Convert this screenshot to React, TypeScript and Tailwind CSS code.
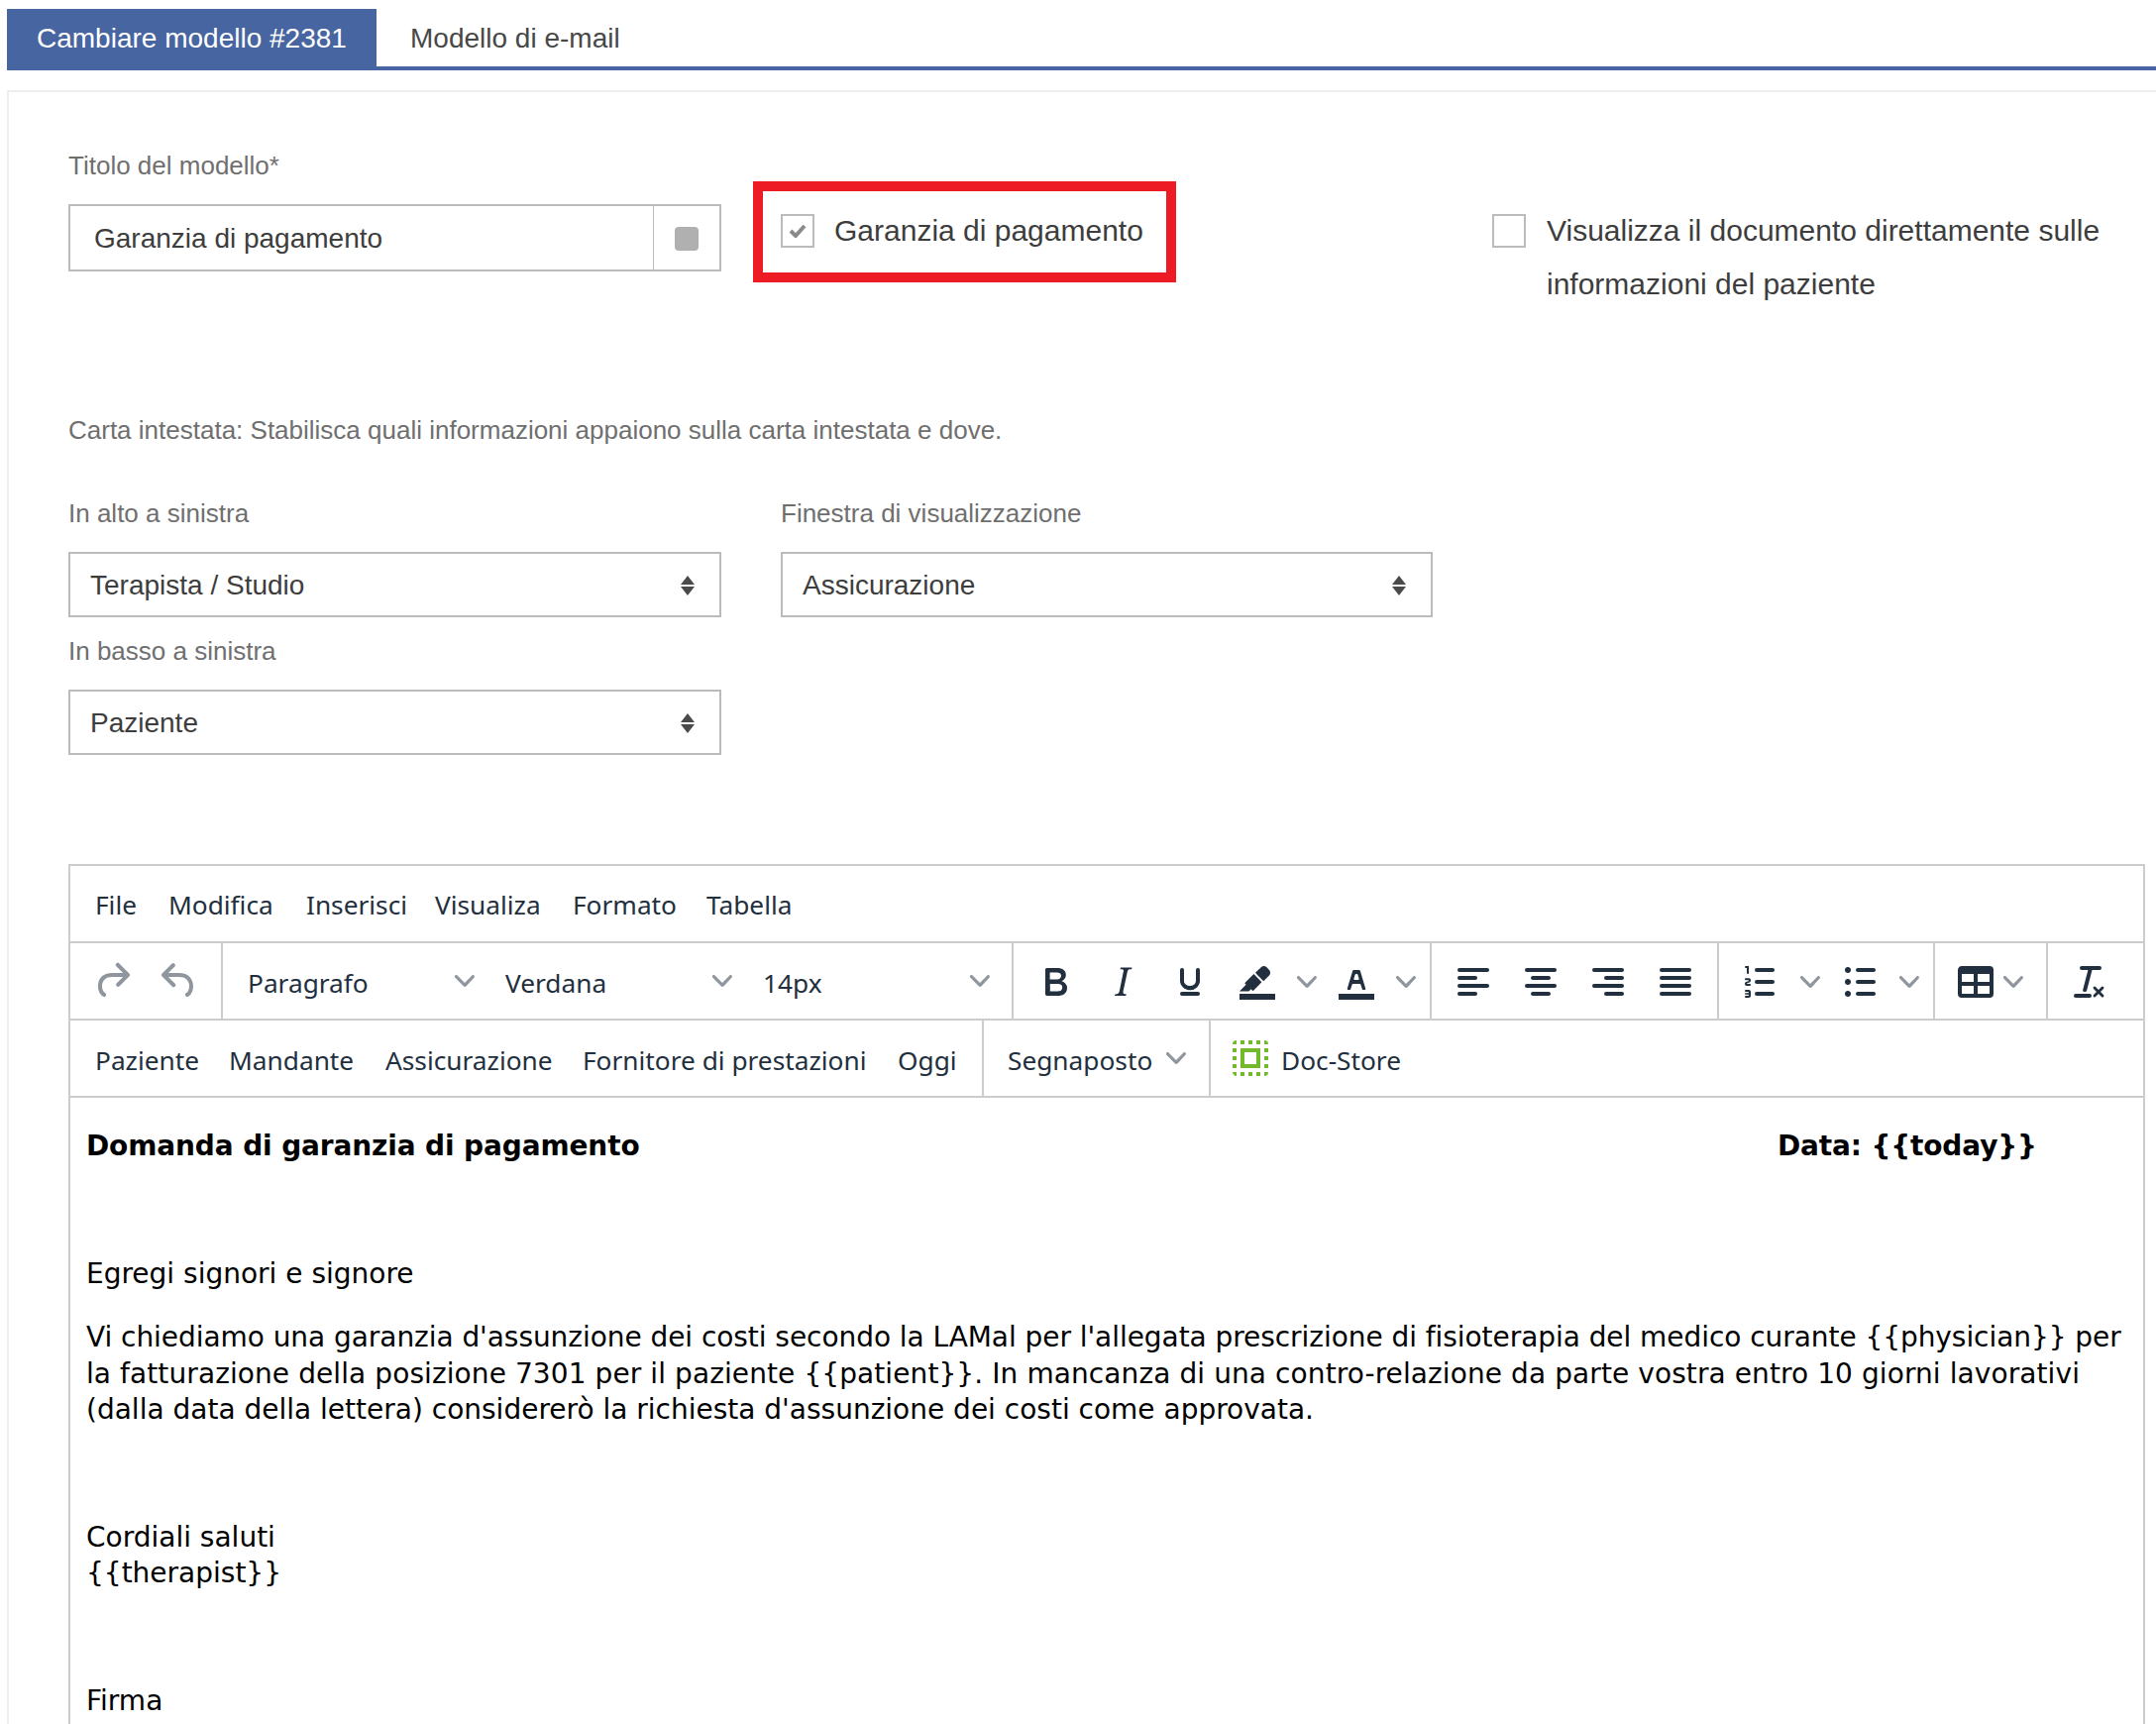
import type { ReactNode } from "react";

const icons: Record<string, ReactNode> = {
  redo: <path d="M17.6 10H12c-2.8 0-4.4 1.4-4.9 3.5-.4 2 .3 4 1.4 4.6a1 1 0 1 1-1 1.8c-2-1.1-2.9-4-2.4-6.8.6-3 3-5.1 6.9-5.1h5.6l-3.3-3.3a1 1 0 1 1 1.4-1.4l5 5a1 1 0 0 1 0 1.4l-5 5a1 1 0 0 1-1.4-1.4l3.3-3.3z" />,
  undo: <path d="M6.4 8H12c3.7 0 6.2 2 6.8 5.1.6 2.7-.4 5.6-2.3 6.8a1 1 0 0 1-1-1.8c1.1-.6 1.8-2.7 1.4-4.6-.5-2.1-2.1-3.5-4.9-3.5H6.4l3.3 3.3a1 1 0 1 1-1.4 1.4l-5-5a1 1 0 0 1 0-1.4l5-5a1 1 0 0 1 1.4 1.4L6.4 8z" />,
  bold: <path fillRule="evenodd" d="M7.8 19c-.3 0-.5 0-.6-.2l-.2-.5V5.7c0-.2 0-.4.2-.5l.6-.2h5c1.5 0 2.7.3 3.5 1 .7.6 1.1 1.4 1.1 2.5a3 3 0 0 1-.6 1.9c-.4.6-1 1-1.6 1.2.4.1.9.3 1.3.6s.8.7 1 1.2c.4.4.5 1 .5 1.6 0 1.3-.4 2.3-1.3 3-.8.7-2.1 1-3.8 1H7.8zm5-8.3c.6 0 1.2-.1 1.6-.5.4-.3.6-.7.6-1.3 0-1.1-.8-1.7-2.3-1.7H9.3v3.5h3.4zm.5 6c.7 0 1.3-.1 1.7-.4.4-.4.6-.9.6-1.5s-.2-1-.7-1.4c-.4-.3-1-.4-2-.4H9.4v3.8h4z" />,
  italic: <path fillRule="evenodd" d="M16.7 4.7l-.1.9h-.3c-.6 0-1 0-1.4.3-.3.3-.4.6-.5 1.1l-2.1 9.8v.6c0 .5.4.8 1.4.8h.2l-.2.8H8l.2-.8h.2c1.1 0 1.8-.5 2-1.5l2-9.8.1-.5c0-.6-.4-.8-1.4-.8h-.3l.2-.9h5.8z" />,
  underline: <path fillRule="evenodd" d="M16 5c.6 0 1 .4 1 1v5.5a4 4 0 0 1-.4 1.8l-1 1.4a5.3 5.3 0 0 1-5.5 1 5 5 0 0 1-1.6-1c-.5-.4-.8-.9-1.1-1.4a4 4 0 0 1-.4-1.8V6c0-.6.4-1 1-1s1 .4 1 1v5.5c0 .3 0 .6.2 1l.6.7a3.3 3.3 0 0 0 2.2.8 3.4 3.4 0 0 0 2.2-.8c.3-.2.4-.5.6-.8l.2-.9V6c0-.6.4-1 1-1zM8 17h8c.6 0 1 .4 1 1s-.4 1-1 1H8a1 1 0 0 1 0-2z" />,
  highlight: (
    <g fillRule="evenodd">
      <path d="M3 18h18v3H3z" />
      <path fillRule="nonzero" d="M7.7 16.7H3l3.3-3.3-.7-.8L10.2 8l4 4.1-4 4.2c-.2.2-.6.2-.8 0l-.6-.7-1.1 1.1zm5-7.5L11 7.4l3-2.9a2 2 0 0 1 2.6 0L18 6c.7.7.7 2 0 2.7l-2.9 2.9-1.8-1.8-.5-.6" />
    </g>
  ),
  textColor: (
    <g fillRule="evenodd">
      <path d="M3 18h18v3H3z" />
      <path d="M8.7 16h-.8a.5.5 0 0 1-.5-.6l2.7-9c.1-.3.3-.4.5-.4h2.8c.2 0 .4.1.5.4l2.7 9a.5.5 0 0 1-.5.6h-.8a.5.5 0 0 1-.4-.4l-.7-2.2c0-.2-.3-.4-.5-.4h-3.4c-.2 0-.4.2-.5.4l-.7 2.2c0 .2-.2.4-.4.4zm2.6-7.6l-.6 2a.5.5 0 0 0 .5.6h1.6a.5.5 0 0 0 .5-.6l-.6-2c0-.3-.3-.4-.5-.4h-.4c-.2 0-.4.1-.5.4z" />
    </g>
  ),
  alignLeft: <path fillRule="evenodd" d="M5 5h14c.6 0 1 .4 1 1s-.4 1-1 1H5a1 1 0 1 1 0-2zm0 4h8c.6 0 1 .4 1 1s-.4 1-1 1H5a1 1 0 1 1 0-2zm0 8h8c.6 0 1 .4 1 1s-.4 1-1 1H5a1 1 0 0 1 0-2zm0-4h14c.6 0 1 .4 1 1s-.4 1-1 1H5a1 1 0 0 1 0-2z" />,
  alignCenter: <path fillRule="evenodd" d="M5 5h14c.6 0 1 .4 1 1s-.4 1-1 1H5a1 1 0 1 1 0-2zm3 4h8c.6 0 1 .4 1 1s-.4 1-1 1H8a1 1 0 1 1 0-2zm0 8h8c.6 0 1 .4 1 1s-.4 1-1 1H8a1 1 0 0 1 0-2zm-3-4h14c.6 0 1 .4 1 1s-.4 1-1 1H5a1 1 0 0 1 0-2z" />,
  alignRight: <path fillRule="evenodd" d="M5 5h14c.6 0 1 .4 1 1s-.4 1-1 1H5a1 1 0 1 1 0-2zm6 4h8c.6 0 1 .4 1 1s-.4 1-1 1h-8a1 1 0 0 1 0-2zm0 8h8c.6 0 1 .4 1 1s-.4 1-1 1h-8a1 1 0 0 1 0-2zm-6-4h14c.6 0 1 .4 1 1s-.4 1-1 1H5a1 1 0 0 1 0-2z" />,
  justify: <path fillRule="evenodd" d="M5 5h14c.6 0 1 .4 1 1s-.4 1-1 1H5a1 1 0 1 1 0-2zm0 4h14c.6 0 1 .4 1 1s-.4 1-1 1H5a1 1 0 1 1 0-2zm0 4h14c.6 0 1 .4 1 1s-.4 1-1 1H5a1 1 0 0 1 0-2zm0 4h14c.6 0 1 .4 1 1s-.4 1-1 1H5a1 1 0 0 1 0-2z" />,
  ordered: <path fillRule="evenodd" d="M10 17h8c.6 0 1 .4 1 1s-.4 1-1 1h-8a1 1 0 0 1 0-2zm0-6h8c.6 0 1 .4 1 1s-.4 1-1 1h-8a1 1 0 0 1 0-2zm0-6h8c.6 0 1 .4 1 1s-.4 1-1 1h-8a1 1 0 1 1 0-2zM6 4v3.5c0 .3-.2.5-.5.5a.5.5 0 0 1-.5-.5V5h-.5a.5.5 0 0 1 0-1H6zm-1 8.8l.2.2h1.3c.3 0 .5.2.5.5s-.2.5-.5.5H4.9a1 1 0 0 1-.9-1V13c0-.4.3-.8.6-1l1.2-.4.2-.3a.2.2 0 0 0-.2-.2H4.5a.5.5 0 0 1-.5-.5c0-.3.2-.5.5-.5h1.6c.5 0 .9.4.9 1v.1c0 .4-.3.8-.6 1l-1.2.4-.2.3zM7 17v2c0 .6-.4 1-1 1H4.5a.5.5 0 0 1 0-1h1.2c.2 0 .3-.1.3-.3 0-.2-.1-.3-.3-.3H4.4a.4.4 0 1 1 0-.8h1.3c.2 0 .3-.1.3-.3 0-.2-.1-.3-.3-.3H4.5a.5.5 0 1 1 0-1H6c.6 0 1 .4 1 1z" />,
  unordered: <path fillRule="evenodd" d="M11 5h8c.6 0 1 .4 1 1s-.4 1-1 1h-8a1 1 0 0 1 0-2zm0 6h8c.6 0 1 .4 1 1s-.4 1-1 1h-8a1 1 0 0 1 0-2zm0 6h8c.6 0 1 .4 1 1s-.4 1-1 1h-8a1 1 0 0 1 0-2zM4.5 6c0-.4.1-.8.4-1 .3-.4.7-.5 1.1-.5.4 0 .8.1 1 .4.4.3.5.7.5 1.1 0 .4-.1.8-.4 1-.3.4-.7.5-1.1.5-.4 0-.8-.1-1-.4-.4-.3-.5-.7-.5-1.1zm0 6c0-.4.1-.8.4-1 .3-.4.7-.5 1.1-.5.4 0 .8.1 1 .4.4.3.5.7.5 1.1 0 .4-.1.8-.4 1-.3.4-.7.5-1.1.5-.4 0-.8-.1-1-.4-.4-.3-.5-.7-.5-1.1zm0 6c0-.4.1-.8.4-1 .3-.4.7-.5 1.1-.5.4 0 .8.1 1 .4.4.3.5.7.5 1.1 0 .4-.1.8-.4 1-.3.4-.7.5-1.1.5-.4 0-.8-.1-1-.4-.4-.3-.5-.7-.5-1.1z" />,
  table: <path fillRule="nonzero" d="M19 4a2 2 0 0 1 2 2v12a2 2 0 0 1-2 2H5a2 2 0 0 1-2-2V6c0-1.1.9-2 2-2h14zM5 14v4h6v-4H5zm14 0h-6v4h6v-4zm0-6h-6v4h6V8zM5 12h6V8H5v4z" />,
  clear: <path fillRule="evenodd" d="M13.2 6a1 1 0 0 1 0 .2l-2.6 10a1 1 0 0 1-1 .8h-.2a.8.8 0 0 1-.8-1l2.6-10H8a1 1 0 1 1 0-2h9a1 1 0 0 1 0 2h-3.8zM5 18h7a1 1 0 0 1 0 2H5a1 1 0 0 1 0-2zm13 1.5L16.5 18 15 19.5a.7.7 0 0 1-1-1l1.5-1.5-1.5-1.5a.7.7 0 0 1 1-1l1.5 1.5 1.5-1.5a.7.7 0 0 1 1 1L17.5 17l1.5 1.5a.7.7 0 0 1-1 1z" />,
  selectAll: <path fillRule="nonzero" d="M3 5h2V3a2 2 0 0 0-2 2zm0 8h2v-2H3v2zm4 8h2v-2H7v2zM3 9h2V7H3v2zm10-6h-2v2h2V3zm6 0v2h2a2 2 0 0 0-2-2zM5 21v-2H3c0 1.1.9 2 2 2zm-2-4h2v-2H3v2zM9 3H7v2h2V3zm2 18h2v-2h-2v2zm8-8h2v-2h-2v2zm0 8a2 2 0 0 0 2-2h-2v2zm0-12h2V7h-2v2zm0 8h2v-2h-2v2zm-4 4h2v-2h-2v2zm0-16h2V3h-2v2zM7 17h10V7H7v10zm2-8h6v6H9V9z" />,
};

const Icon = ({ name, className = "fill-[#222f3e]" }: { name: string; className?: string }) => (
  <svg viewBox="0 0 24 24" className={`w-12 h-12 ${className}`}>
    {icons[name]}
  </svg>
);

const Chevron = () => (
  <svg viewBox="0 0 10 10" className="w-5 h-5 fill-[#222f3e] opacity-50">
    <path d="M8.7 2.2c.3-.3.8-.3 1 0 .4.4.4.9 0 1.2L5.7 7.8c-.3.3-.9.3-1.2 0L.2 3.4a.8.8 0 0 1 0-1.2c.3-.3.8-.3 1.1 0L5 6l3.7-3.8z" />
  </svg>
);

const Btn = ({ name }: { name: string }) => (
  <div className="w-[68px] flex items-center justify-center pt-[2px]">
    <Icon name={name} />
  </div>
);

const Caret = () => (
  <div className="w-8 flex items-center justify-center pt-[2px]">
    <Chevron />
  </div>
);

const Group = ({ children, last }: { children: ReactNode; last?: boolean }) => (
  <div className={`flex px-2 ${last ? "" : "border-r-2 border-[#ccc]"}`}>{children}</div>
);

const FontSelect = ({ label }: { label: string }) => (
  <div className="w-[260px] flex items-center justify-between pl-[17px] pr-[14px]">
    <span className="pt-[5px]">{label}</span>
    <Chevron />
  </div>
);

const SelectBox = ({ label, value }: { label: string; value: string }) => (
  <div>
    <div className="text-[26px] leading-8 text-[#6f6f6f]">{label}</div>
    <div className="mt-[23px] h-[66px] border-2 border-[#bbb] flex items-center justify-between pl-5 pr-[25px] text-[28px] text-[#3d3d3d]">
      <span className="pt-[2px]">{value}</span>
      <div className="flex flex-col gap-[2px] pt-[2px]">
        <div className="w-0 h-0 border-x-[7.5px] border-x-transparent border-b-[9px] border-b-[#4a4a4a]" />
        <div className="w-0 h-0 border-x-[7.5px] border-x-transparent border-t-[9px] border-t-[#4a4a4a]" />
      </div>
    </div>
  </div>
);

const App = () => {
  return (
    <div className="h-[1740px] overflow-hidden bg-white pt-[9px] font-['Liberation_Sans',Arial,sans-serif]">
      {/* Tabs */}
      <div className="ml-[7px] flex border-b-4 border-[#4765a0] h-[62px]">
        <div className="w-[373px] bg-[#4765a0] text-white text-[28px] flex items-center pl-[30px] pt-[2px]">
          Cambiare modello #2381
        </div>
        <div className="pl-[34px] pt-[2px] text-[28px] text-[#484848] flex items-center">Modello di e-mail</div>
      </div>

      <div className="mt-5 ml-[7px] border-l-2 border-t-2 border-[#eeeeee] pl-[60px] pt-[58px] h-[1700px]">
        {/* Top row */}
        <div className="grid grid-cols-[659px_658px_1fr] gap-x-[60px] h-[267px]">
          <div>
            <div className="text-[26px] leading-8 text-[#6f6f6f]">Titolo del modello*</div>
            <div className="mt-[23px] h-[68px] border-2 border-[#bbb] flex text-[28px] text-[#3d3d3d]">
              <div className="flex-1 flex items-center pl-6 pt-[2px]">Garanzia di pagamento</div>
              <div className="w-[67px] border-l border-[#bbb] flex items-center justify-center pt-[2px]">
                <div className="w-6 h-6 rounded bg-[#b0b0b0]" />
              </div>
            </div>
          </div>
          <div className="relative pt-[65px]">
            <div className="flex items-start gap-5 text-[30px] leading-[54px] text-[#3d3d3d]">
              <div className="w-[34px] h-[34px] border-2 border-[#bbb] flex items-center justify-center shrink-0">
                <svg viewBox="0 0 18 14" className="w-[18px] h-[14px] fill-none stroke-[#8a8a8a] stroke-[4]">
                  <path d="M2 7l5 5 9-10" />
                </svg>
              </div>
              <span className="-mt-[10px]">Garanzia di pagamento</span>
            </div>
            <div className="absolute left-[-28px] top-[32px] w-[427px] h-[102px] border-[10px] border-[#ed1c24]" />
          </div>
          <div className="pt-[65px] flex items-start gap-[21px] text-[30px] leading-[54px] text-[#3d3d3d]">
            <div className="w-[34px] h-[34px] border-2 border-[#bbb] shrink-0" />
            <span className="-mt-[10px] w-[570px]">Visualizza il documento direttamente sulle informazioni del paziente</span>
          </div>
        </div>

        <div className="text-[26px] leading-8 text-[#6f6f6f]">
          Carta intestata: Stabilisca quali informazioni appaiono sulla carta intestata e dove.
        </div>

        {/* Letterhead selects */}
        <div className="mt-[52px] grid grid-cols-[659px_658px] gap-x-[60px] items-start">
          <div className="flex flex-col gap-[18px]">
            <SelectBox label="In alto a sinistra" value="Terapista / Studio" />
            <SelectBox label="In basso a sinistra" value="Paziente" />
          </div>
          <SelectBox label="Finestra di visualizzazione" value="Assicurazione" />
        </div>

        {/* Editor */}
        <div className="mt-[110px] mr-[11px] border-2 border-[#ccc] text-[#222f3e] font-['Noto_Sans',sans-serif] text-[26.25px]">
          <div className="h-[76px] flex items-center pl-[25px] pt-[4px]">
            <span className="w-[74px]">File</span>
            <span className="w-[139px]">Modifica</span>
            <span className="w-[130px]">Inserisci</span>
            <span className="w-[139px]">Visualiza</span>
            <span className="w-[135px]">Formato</span>
            <span>Tabella</span>
          </div>
          <div className="h-[78px] flex border-t-2 border-[#ccc]">
            <div className="flex pl-2 pr-2 border-r-2 border-[#ccc]">
              <div className="w-[68px] flex items-center justify-center"><Icon name="redo" className="fill-[#222f3e] opacity-50" /></div>
              <div className="w-[68px] flex items-center justify-center"><Icon name="undo" className="fill-[#222f3e] opacity-50" /></div>
            </div>
            <div className="flex pl-2 pr-2 border-r-2 border-[#ccc]">
              <FontSelect label="Paragrafo" />
              <FontSelect label="Verdana" />
              <FontSelect label="14px" />
            </div>
            <Group>
              <Btn name="bold" />
              <Btn name="italic" />
              <Btn name="underline" />
              <Btn name="highlight" />
              <Caret />
              <Btn name="textColor" />
              <Caret />
            </Group>
            <Group>
              <Btn name="alignLeft" />
              <Btn name="alignCenter" />
              <Btn name="alignRight" />
              <Btn name="justify" />
            </Group>
            <Group>
              <Btn name="ordered" />
              <Caret />
              <Btn name="unordered" />
              <Caret />
            </Group>
            <Group>
              <div className="w-24 flex items-center pl-[9px] gap-[4px] pt-[2px]">
                <Icon name="table" />
                <Chevron />
              </div>
            </Group>
            <Group last>
              <Btn name="clear" />
            </Group>
          </div>
          <div className="h-[80px] flex border-y-2 border-[#ccc]">
            <div className="w-[922px] flex items-center pl-[25px] border-r-2 border-[#ccc]">
              <span className="w-[135px] pt-[5px]">Paziente</span>
              <span className="w-[158px] pt-[5px]">Mandante</span>
              <span className="w-[199px] pt-[5px]">Assicurazione</span>
              <span className="w-[318px] pt-[5px]">Fornitore di prestazioni</span>
              <span className="pt-[5px]">Oggi</span>
            </div>
            <div className="w-[229px] flex items-center justify-between pl-[24px] pr-[23px] border-r-2 border-[#ccc]">
              <span className="pt-[5px]">Segnaposto</span>
              <Chevron />
            </div>
            <div className="flex items-center pl-[16px] gap-[7px]">
              <Icon name="selectAll" className="fill-[#73b92b]" />
              <span className="pt-[5px]">Doc-Store</span>
            </div>
          </div>
          {/* Document body */}
          <div className="pl-4 pr-2 pt-[31px] h-[800px] text-[28px] leading-[36.4px] text-black font-['DejaVu_Sans',Verdana,sans-serif] flex flex-col gap-7">
            <div className="flex font-bold">
              <span className="w-[1707px] shrink-0 tracking-[-0.13px]">Domanda di garanzia di pagamento</span>
              <span className="tracking-[-0.15px]">Data: {"{{today}}"}</span>
            </div>
            <div className="h-[36.4px]" />
            <div>Egregi signori e signore</div>
            <div>
              <div className="whitespace-nowrap tracking-[-0.055px]">
                Vi chiediamo una garanzia d'assunzione dei costi secondo la LAMal per l'allegata prescrizione di fisioterapia del medico curante {"{{physician}}"} per
              </div>
              <div className="whitespace-nowrap tracking-[0.09px]">
                la fatturazione della posizione 7301 per il paziente {"{{patient}}"}. In mancanza di una contro-relazione da parte vostra entro 10 giorni lavorativi
              </div>
              <div className="whitespace-nowrap">
                (dalla data della lettera) considererò la richiesta d'assunzione dei costi come approvata.
              </div>
            </div>
            <div className="h-[36.4px]" />
            <div>
              Cordiali saluti
              <br />
              {"{{therapist}}"}
            </div>
            <div className="h-[36.4px]" />
            <div>Firma</div>
          </div>
        </div>
      </div>
    </div>
  );
};

export default App;
